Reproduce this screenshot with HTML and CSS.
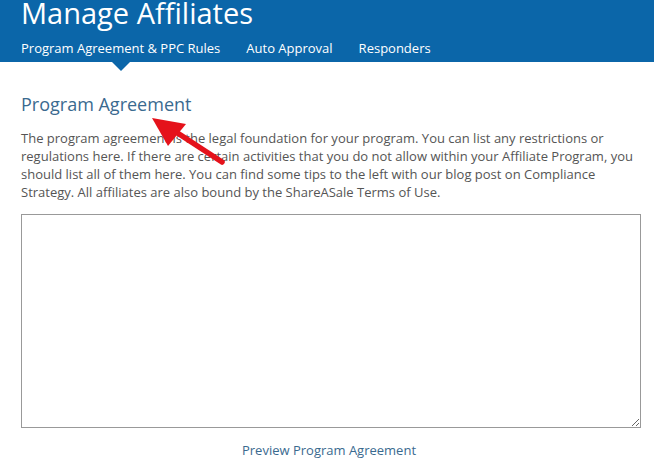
FILE: index.html
```html
<!DOCTYPE html>
<html lang="en">
<head>
<meta charset="UTF-8">
<meta name="viewport" content="width=device-width, initial-scale=1.0">
<title>Manage Affiliates</title>
<link rel="stylesheet" href="styles.css">
</head>
<body>
  <div class="header">
    <h1>Manage Affiliates</h1>
    <ul class="tabs">
      <li class="active"><a href="#">Program Agreement &amp; PPC Rules</a></li>
      <li><a href="#">Auto Approval</a></li>
      <li><a href="#">Responders</a></li>
    </ul>
  </div>

  <div class="content">
    <h2>Program Agreement</h2>
    <p>The program agreement is the legal foundation for your program. You can list any restrictions or regulations here. If there are certain activities that you do not allow within your Affiliate Program, you should list all of them here. You can find some tips to the left with our blog post on Compliance Strategy. All affiliates are also bound by the ShareASale Terms of Use.</p>
    <textarea id="agreement"></textarea>
    <div class="preview"><a href="#">Preview Program Agreement</a></div>

    <!-- annotation arrow -->
    <svg class="arrow" width="90" height="60" viewBox="0 0 90 60">
      <line x1="76" y1="50" x2="30" y2="20" stroke="#e5121b" stroke-width="5.5" stroke-linecap="round"/>
      <polygon points="6,6 40,12 22,34" fill="#e5121b"/>
    </svg>
  </div>
</body>
</html>
```

FILE: styles.css
```css
body {
  font-family: "Open Sans", Arial, sans-serif;
  margin: 0;
  padding: 0;
  background-color: #fff;
  color: #555;
}

.header {
  background-color: #0b66a9;
  height: 62px;
  padding: 0 21px;
  box-sizing: border-box;
  position: relative;
}

.header h1 {
  margin: 0;
  color: #fff;
  font-weight: normal;
  font-size: 29px;
  line-height: 26px;
}

.tabs {
  list-style: none;
  margin: 0;
  padding: 0;
  display: flex;
  gap: 26px;
  margin-top: 10px;
}

.tabs li {
  position: relative;
}

.tabs a {
  color: #fff;
  text-decoration: none;
  font-size: 13px;
  line-height: 18px;
}

.tabs li.active::after {
  content: "";
  position: absolute;
  left: 50%;
  margin-left: -9px;
  top: 26px;
  border-left: 9px solid transparent;
  border-right: 9px solid transparent;
  border-top: 9px solid #0b66a9;
}

.content {
  padding: 30px 21px 0 21px;
  position: relative;
}

.content h2 {
  margin: 0;
  font-size: 18px;
  font-weight: normal;
  color: #3a6a8f;
  line-height: 24px;
}

.content p {
  margin: 13px 0 0 0;
  font-size: 13px;
  line-height: 18px;
  color: #555;
}

#agreement {
  display: block;
  width: 620px;
  height: 214px;
  margin-top: 13px;
  border: 1px solid #999;
  border-radius: 0;
  box-sizing: border-box;
  resize: both;
}

.preview {
  text-align: center;
  margin-top: 13px;
  padding-left: 4px;
  font-size: 13px;
}

.preview a {
  color: #3a6a8f;
  text-decoration: none;
}

.arrow {
  position: absolute;
  left: 146px;
  top: 50px;
}
```
